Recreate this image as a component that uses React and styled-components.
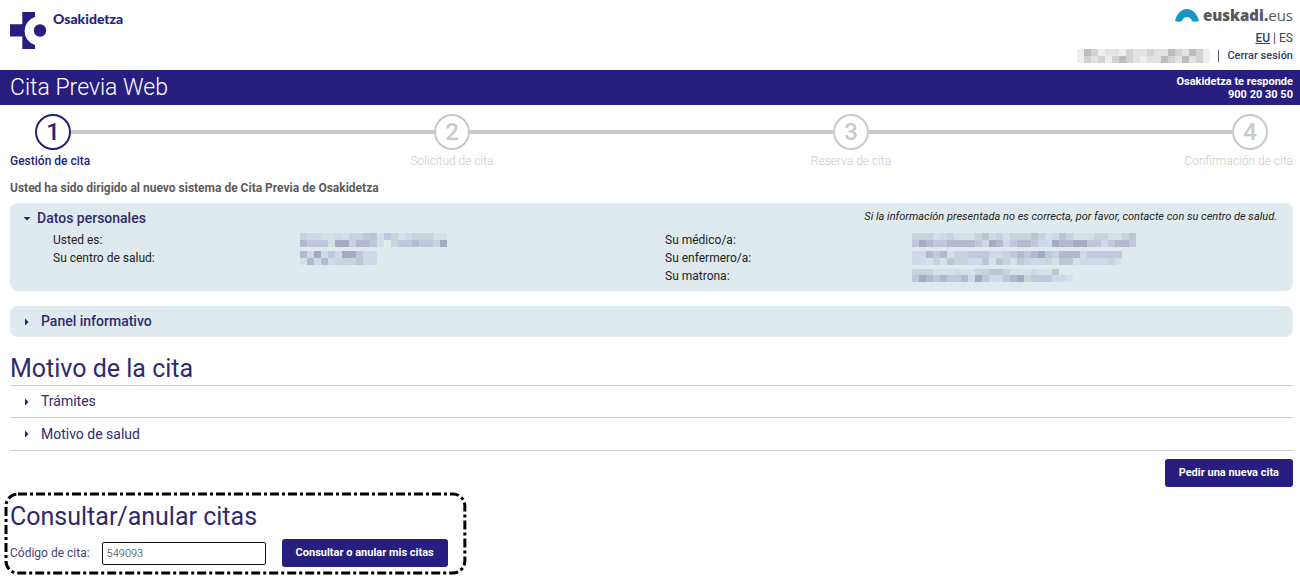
import React, { useState } from 'react';
import styled, { createGlobalStyle } from 'styled-components';

const navy = '#271e7f';
const navyText = '#2f2a6f';
const grey = '#c9c9c9';
const panel = '#dfeaee';

const GlobalStyle = createGlobalStyle`
  *, *::before, *::after { box-sizing: border-box; }
  body {
    margin: 0;
    background: #fff;
    color: #333;
    font-family: Roboto, "Liberation Sans", sans-serif;
    font-size: 12px;
    line-height: 18px;
  }
`;

const Header = styled.header`
  display: flex;
  justify-content: space-between;
  padding: 6px 7px 7px 10px;
`;

const Brand = styled.a`
  display: flex;
  align-items: flex-start;
  gap: 6px;
  padding-top: 4px;
  color: ${navy};
  font: 900 14px/18px Lato, "Open Sans", sans-serif;
  text-decoration: none;

  svg { display: block; margin-top: 2px; }
`;

const HeaderSide = styled.div`
  display: flex;
  flex-direction: column;
  align-items: flex-end;
`;

const Euskadi = styled.a`
  display: flex;
  align-items: center;
  gap: 4px;
  height: 18px;
  margin-bottom: 5px;
  color: #58585a;
  font: 400 15px/18px "Open Sans", sans-serif;
  text-decoration: none;

  strong { font-weight: 800; }
`;

const Languages = styled.nav`
  display: flex;
  gap: 3px;
  margin-bottom: 2px;
  color: #444;
  line-height: 18px;

  a { color: #2b3f6f; font-weight: 500; }
`;

const Session = styled.div`
  display: flex;
  align-items: center;
  gap: 8px;

  a {
    padding-left: 8px;
    border-left: 1px solid #55556a;
    color: #363b66;
    font-size: 11px;
    font-weight: 500;
    line-height: 12px;
    text-decoration: none;
  }
`;

const TitleBar = styled.div`
  display: flex;
  justify-content: space-between;
  align-items: center;
  height: 35px;
  padding: 0 7px 0 10px;
  background: ${navy};
  color: #fff;

  h1 { margin: 0; font-size: 23px; font-weight: 300; line-height: 34px; }
  p { margin: 0; font-size: 11px; font-weight: 700; line-height: 13px; text-align: right; }
`;

const Main = styled.main`
  padding: 9px 7px 5px 10px;
`;

const Steps = styled.ol`
  display: flex;
  margin: 0;
  padding: 0 25px;
  list-style: none;
`;

const Step = styled.li`
  display: flex;
  color: ${(p) => (p.$active ? navy : grey)};

  &:not(:first-child) { flex: 1; }
  &:not(:first-child)::before {
    content: "";
    flex: 1;
    height: 4px;
    margin-top: 16px;
    background: ${grey};
  }
`;

const StepBody = styled.div`
  display: flex;
  flex-direction: column;
  align-items: ${(p) => p.$align};
  width: 36px;
`;

const StepNumber = styled.span`
  width: 36px;
  height: 36px;
  border: 2px solid currentColor;
  border-radius: 50%;
  font-size: 24px;
  font-weight: 500;
  line-height: 32px;
  text-align: center;
`;

const StepLabel = styled.span`
  margin: 2px -25px 0;
  font-size: 12px;
  font-weight: ${(p) => (p.$active ? 500 : 300)};
  line-height: 18px;
  white-space: nowrap;
`;

const Notice = styled.p`
  margin: 9px 0 6px;
  color: #5c5c5c;
  font-size: 12px;
  font-weight: 700;
`;

const Panel = styled.section`
  margin-bottom: 15px;
  padding: 6px 16px 6px 13px;
  border-radius: 8px;
  background: ${panel};
`;

const PanelHead = styled.div`
  display: flex;
  justify-content: space-between;

  em { color: #222; font-size: 11px; line-height: 16px; }
`;

const Toggle = styled.button`
  display: flex;
  align-items: center;
  gap: ${(p) => p.$gap}px;
  padding: 0;
  border: 0;
  background: none;
  color: ${navyText};
  font: ${(p) => p.$weight} 14px/19px Roboto, sans-serif;
  cursor: pointer;

  svg { display: block; }
`;

const Heading = styled.h3`
  margin: 0;
`;

const Data = styled.div`
  display: grid;
  grid-template-columns: 1fr 1fr;
  margin: 3px 0 0 30px;
  min-height: 54px;
`;

const DataList = styled.dl`
  display: grid;
  grid-template-columns: 2fr 3fr;
  column-gap: 3px;
  align-content: start;
  margin: 0;
  color: #222;

  dt { line-height: 18px; }
  dd { margin: 0; padding-top: 2px; height: 18px; }
  svg { display: block; }
`;

const SectionTitle = styled.h2`
  margin: 0;
  color: ${navyText};
  font-size: 25px;
  font-weight: 400;
  line-height: 33px;
`;

const Reasons = styled.ul`
  margin: 0;
  padding: 0;
  border-top: 1px solid #ccc;
  list-style: none;

  li {
    display: flex;
    align-items: center;
    height: 32px;
    padding-left: 13px;
    border-bottom: 1px solid #ccc;
  }
  li + li { height: 33px; }
`;

const Actions = styled.div`
  display: flex;
  justify-content: flex-end;
  padding: 8px 0 6px;
`;

const Button = styled.button`
  height: 28px;
  padding: 0 14px;
  border: 0;
  border-radius: 3px;
  background: ${navy};
  color: #fff;
  font: 700 11px/28px Roboto, sans-serif;
  white-space: nowrap;
  cursor: pointer;
`;

const Lookup = styled.section`
  position: relative;
  width: fit-content;
  margin-left: -5px;
  padding: 7px 18px 7px 5px;
`;

const Outline = styled.svg`
  position: absolute;
  inset: 0;
  width: 100%;
  height: 100%;
  overflow: visible;
  pointer-events: none;
`;

const LookupForm = styled.form`
  display: flex;
  align-items: center;
  margin-top: 6px;

  label { margin-right: 12px; color: #45427a; }
`;

const CodeInput = styled.input`
  width: 164px;
  height: 23px;
  margin-right: 16px;
  padding: 0 4px;
  border: 1px solid #111;
  border-radius: 2px;
  outline: 0;
  color: #333;
  font: 300 11px/18px Roboto, sans-serif;
`;

function Arrow({ open }) {
  return (
    <svg width="8" height="8" viewBox="0 0 8 8" fill={navy} aria-hidden="true">
      <path d={open ? 'M0.5 2h7L4 5.5z' : 'M2 0.5v7l3.5-3.5z'} />
    </svg>
  );
}

const tones = {
  a: '#d5e1e8', b: '#c9d3db', c: '#c2c6de', d: '#b5b9cf', e: '#a6aac5', g: '#bdc7d0', l: '#d1d8ea',
  p: '#eeeeee', q: '#e2e2e2', r: '#d2d2d2', s: '#bdbdbd',
};

function Mosaic({ rows, cell = 7, heights }) {
  const tops = heights.map((_, i) => heights.slice(0, i).reduce((s, h) => s + h, 0));
  const total = heights.reduce((s, h) => s + h, 0);
  return (
    <svg width={rows[0].length * cell} height={total} shapeRendering="crispEdges" aria-hidden="true">
      {rows.map((row, y) =>
        [...row].map((t, x) =>
          tones[t] ? <rect key={`${x}-${y}`} x={x * cell} y={tops[y]} width={cell} height={heights[y]} fill={tones[t]} /> : null
        )
      )}
    </svg>
  );
}

const steps = ['Gestión de cita', 'Solicitud de cita', 'Reserva de cita', 'Confirmación de cita'];

export default function App() {
  const [code, setCode] = useState('549093');
  return (
    <>
      <GlobalStyle />
      <Header>
        <Brand href="#">
          <svg width="37" height="37" viewBox="0 0 37 37" fill={navy} aria-hidden="true">
            <path d="M12.3 0H25V5A14.6 14.6 0 0 0 25 33V37H12.3V24.5H0V12.3H12.3Z" />
            <circle cx="30" cy="18.5" r="6.2" />
          </svg>
          Osakidetza
        </Brand>
        <HeaderSide>
          <Euskadi href="#">
            <svg width="24" height="13" viewBox="0 0 24 13" aria-hidden="true">
              <path d="M0 12C2 4 7 0 12 0s10 4 12 12c-3 1-5 1-7 0-1-3-3-4-5-4s-4 1-5 4c-2 1-4 1-7 0Z" fill="#1795c6" />
            </svg>
            <span><strong>euskadi.</strong>eus</span>
          </Euskadi>
          <Languages aria-label="Idioma">
            <a href="#">EU</a><span>|</span><span>ES</span>
          </Languages>
          <Session>
            <Mosaic heights={[7, 7]} rows={['psrpqqprqqrqqsrqsrp', 'prqrprsrqpqqsrqsqrp']} />
            <a href="#">Cerrar sesión</a>
          </Session>
        </HeaderSide>
      </Header>

      <TitleBar>
        <h1>Cita Previa Web</h1>
        <p>Osakidetza te responde<br />900 20 30 50</p>
      </TitleBar>

      <Main>
        <Steps>
          {steps.map((label, i) => (
            <Step key={label} $active={i === 0}>
              <StepBody $align={i === 0 ? 'flex-start' : i === 3 ? 'flex-end' : 'center'}>
                <StepNumber>{i + 1}</StepNumber>
                <StepLabel $active={i === 0}>{label}</StepLabel>
              </StepBody>
            </Step>
          ))}
        </Steps>

        <Notice>Usted ha sido dirigido al nuevo sistema de Cita Previa de Osakidetza</Notice>

        <Panel>
          <PanelHead>
            <Heading>
              <Toggle type="button" aria-expanded="true" $weight={500} $gap={6}><Arrow open />Datos personales</Toggle>
            </Heading>
            <em>Si la información presentada no es correcta, por favor, contacte con su centro de salud.</em>
          </PanelHead>
          <Data>
            <DataList>
              <dt>Usted es:</dt>
              <dd><Mosaic heights={[7, 7]} rows={['bllaalabbcgacbalbbbaa', 'dcccaeebddca.bccdccbe']} /></dd>
              <dt>Su centro de salud:</dt>
              <dd><Mosaic heights={[7, 7]} rows={['dlelcleecll', 'adldlbbbgll']} /></dd>
            </DataList>
            <DataList>
              <dt>Su médico/a:</dt>
              <dd><Mosaic heights={[7, 7]} rows={['bbbalbaaabglbabbbgbalgbaaabbaabg', 'cedccddddcledlcddclleddeecclcddc']} /></dd>
              <dt>Su enfermero/a:</dt>
              <dd><Mosaic heights={[7, 7]} rows={['lldcdabbcccllbcdcdecbdddlccccc', 'llabagbbllgagbagbllbaggallllba']} /></dd>
              <dt>Su matrona:</dt>
              <dd><Mosaic heights={[6, 7]} rows={['bbbaaalaabbggbaaalaag..', 'cedcdccdlecllcdebccclla']} /></dd>
            </DataList>
          </Data>
        </Panel>

        <Panel>
          <Heading>
            <Toggle type="button" aria-expanded="false" $weight={500} $gap={10}><Arrow />Panel informativo</Toggle>
          </Heading>
        </Panel>

        <SectionTitle>Motivo de la cita</SectionTitle>
        <Reasons>
          <li><Toggle type="button" aria-expanded="false" $weight={400} $gap={10}><Arrow />Trámites</Toggle></li>
          <li><Toggle type="button" aria-expanded="false" $weight={400} $gap={10}><Arrow />Motivo de salud</Toggle></li>
        </Reasons>
        <Actions>
          <Button type="button">Pedir una nueva cita</Button>
        </Actions>

        <Lookup>
          <Outline aria-hidden="true">
            <rect x="1" y="1" width="99.6%" height="97.6%" rx="12" fill="none" stroke="#000" strokeWidth="3" strokeDasharray="9 3 3 3" />
          </Outline>
          <SectionTitle>Consultar/anular citas</SectionTitle>
          <LookupForm onSubmit={(e) => e.preventDefault()}>
            <label htmlFor="codigo">Código de cita:</label>
            <CodeInput id="codigo" value={code} onChange={(e) => setCode(e.target.value)} autoFocus />
            <Button type="submit">Consultar o anular mis citas</Button>
          </LookupForm>
        </Lookup>
      </Main>
    </>
  );
}
